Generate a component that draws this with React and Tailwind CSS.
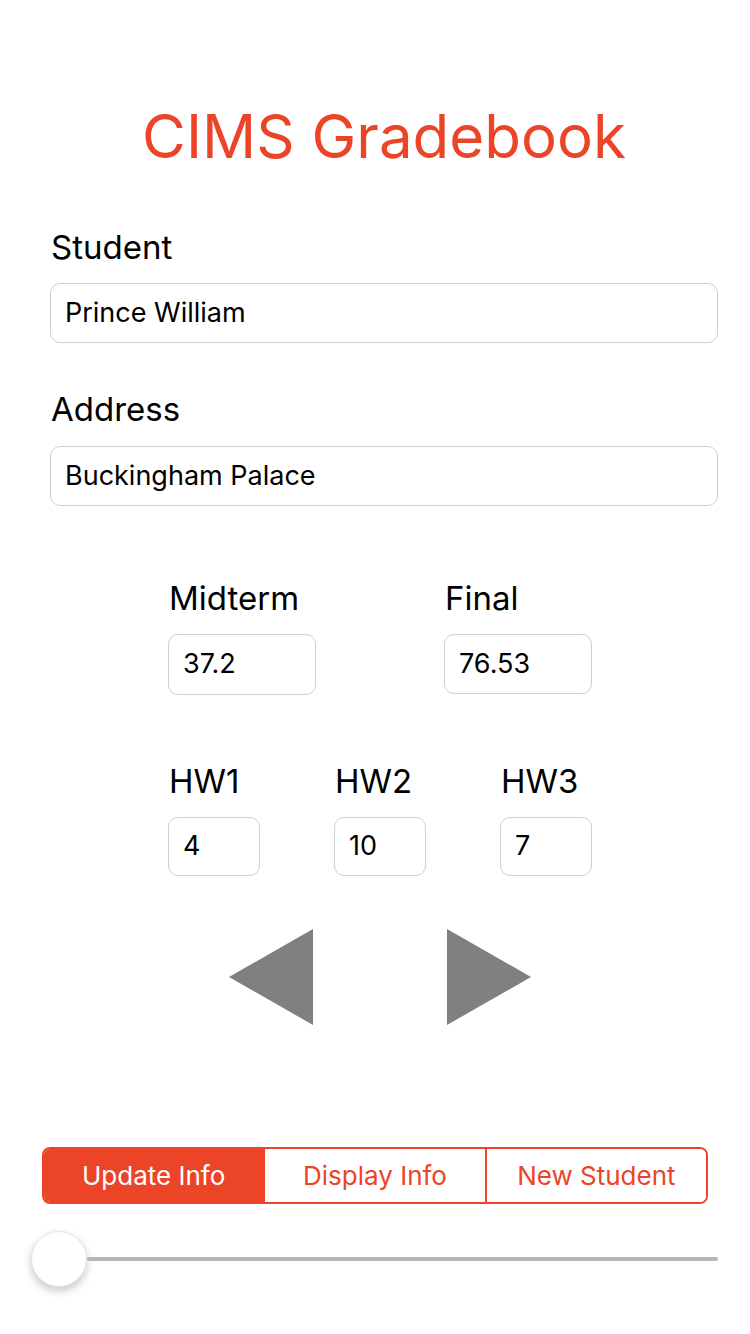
import React, { useState } from 'react';

const Field = ({ label, className = '' }) => (
    <div className={className}>
        <div className="text-[33px] leading-[33px] text-black pl-[1px]">{label}</div>
    </div>
);

const Box = ({ value, className = '' }) => (
    <div className={`flex items-center border border-[#cfcfcf] rounded-[10px] text-[27px] text-black pl-[14px] ${className}`}>
        {value}
    </div>
);

const App = () => {
    const [tab, setTab] = useState(0);
    const tabs = ['Update Info', 'Display Info', 'New Student'];

    return (
        <div className="w-[750px] h-[1334px] bg-white font-['Inter','Noto_Sans',sans-serif] overflow-hidden">
            <div className="pl-[50px] pr-[32px]">
                <h1 className="mt-[106px] text-[60px] leading-[60px] text-center text-[#ec4427]">
                    CIMS Gradebook
                </h1>

                <Field label="Student" className="mt-[65px]" />
                <Box value="Prince William" className="mt-[19px] h-[60px] w-[668px]" />

                <Field label="Address" className="mt-[50px]" />
                <Box value="Buckingham Palace" className="mt-[20px] h-[60px] w-[668px]" />
            </div>

            <div className="ml-[168px] w-[424px]">
                <div className="mt-[76px] flex justify-between">
                    <div className="w-[148px]">
                        <div className="text-[33px] leading-[33px] pl-[1px]">Midterm</div>
                        <Box value="37.2" className="mt-[19px] h-[61px] w-[148px]" />
                    </div>
                    <div className="w-[148px]">
                        <div className="text-[33px] leading-[33px] pl-[1px]">Final</div>
                        <Box value="76.53" className="mt-[19px] h-[60px] w-[148px]" />
                    </div>
                </div>

                <div className="mt-[70px] flex justify-between">
                    {[
                        ['HW1', '4'],
                        ['HW2', '10'],
                        ['HW3', '7'],
                    ].map(([l, v]) => (
                        <div key={l} className="w-[92px]">
                            <div className="text-[33px] leading-[33px] pl-[1px]">{l}</div>
                            <Box value={v} className="mt-[19px] h-[59px] w-[92px]" />
                        </div>
                    ))}
                </div>
            </div>

            {/* prev / next arrows */}
            <div className="mt-[53px] flex justify-center gap-[134px] pl-[10px]">
                <svg width="84" height="96" viewBox="0 0 84 96">
                    <polygon points="84,0 84,96 0,48" fill="#808080" />
                </svg>
                <svg width="84" height="96" viewBox="0 0 84 96">
                    <polygon points="0,0 0,96 84,48" fill="#808080" />
                </svg>
            </div>

            <div className="mt-[122px] ml-[42px] w-[666px] h-[57px] flex border-2 border-[#ec4427] rounded-[8px] overflow-hidden">
                {tabs.map((t, i) => (
                    <button
                        key={t}
                        onClick={() => setTab(i)}
                        className={`flex-1 flex items-center justify-center text-[26px] ${i > 0 ? 'border-l-2 border-[#ec4427]' : ''} ${tab === i ? 'bg-[#ec4427] text-white' : 'bg-white text-[#ec4427]'}`}
                    >
                        {t}
                    </button>
                ))}
            </div>

            {/* slider */}
            <div className="mt-[27px] ml-[31px] w-[687px] flex items-center">
                <div className="w-[56px] h-[56px] rounded-full bg-white border border-[#e4e4e4] shadow-[0_4px_8px_rgba(0,0,0,0.22)] shrink-0" />
                <div className="flex-1 h-[4px] rounded-full bg-[#b6b6b6]" />
            </div>
        </div>
    );
};

export default App;
